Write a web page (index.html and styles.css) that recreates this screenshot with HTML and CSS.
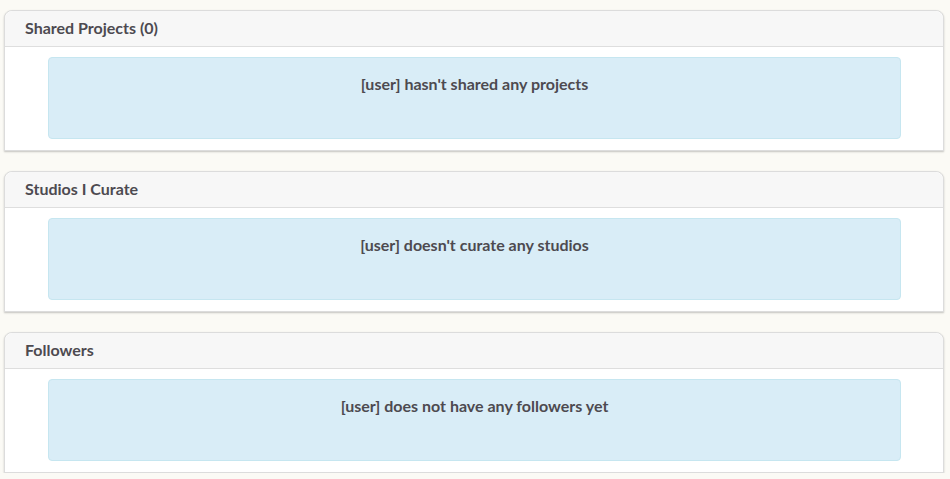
FILE: index.html
```html
<!DOCTYPE html>
<html>
<head>
<meta charset="utf-8">
<link rel="stylesheet" href="styles.css">
</head>
<body>
<div class="page">
  <section class="panel">
    <div class="panel-head">Shared Projects (0)</div>
    <div class="panel-body">
      <div class="alert">[user] hasn't shared any projects</div>
    </div>
  </section>
  <section class="panel">
    <div class="panel-head">Studios I Curate</div>
    <div class="panel-body">
      <div class="alert">[user] doesn't curate any studios</div>
    </div>
  </section>
  <section class="panel">
    <div class="panel-head">Followers</div>
    <div class="panel-body">
      <div class="alert">[user] does not have any followers yet</div>
    </div>
  </section>
</div>
</body>
</html>
```
FILE: styles.css
```css
html, body {
  margin: 0;
  padding: 0;
}
body {
  background: #fbfaf5;
  font-family: Lato, "Open Sans", sans-serif;
  color: #4d4a50;
}
.page {
  display: flex;
  flex-direction: column;
  gap: 20px;
  padding: 10px 6px 0 4px;
}
.panel {
  background: #fff;
  border: 1px solid #dcdcdc;
  border-radius: 8px 8px 0 0;
  box-shadow: 0 1px 2px rgba(0,0,0,0.22);
  box-sizing: border-box;
  height: 141px;
}
.panel-head {
  background: #f7f7f7;
  border-bottom: 1px solid #dedede;
  border-radius: 8px 8px 0 0;
  height: 36px;
  box-sizing: border-box;
  padding: 7px 20px 0;
  font-size: 16px;
  font-weight: 700;
  line-height: 20px;
}
.panel-body {
  padding: 10px 42px 0 43px;
}
.alert {
  background: #d9edf7;
  border: 1px solid #c6e6f0;
  border-radius: 4px;
  height: 82px;
  box-sizing: border-box;
  padding: 16px 10px 0;
  text-align: center;
  font-size: 16px;
  font-weight: 700;
  line-height: 20px;
}
```
